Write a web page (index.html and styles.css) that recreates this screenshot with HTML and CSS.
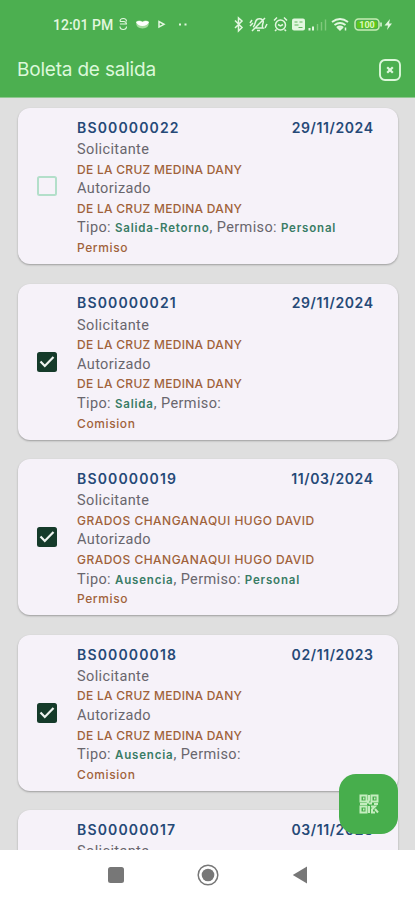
FILE: index.html
```html
<!DOCTYPE html>
<html lang="es">
<head>
<meta charset="utf-8">
<title>Boleta de salida</title>
<link rel="stylesheet" href="styles.css">
</head>
<body>
<div class="app">
  <header class="top">
    <div class="status">
      <span class="clock">12:01 PM</span>
      <svg class="status-left" width="76" height="16" viewBox="0 0 76 16" fill="none" stroke="#e2f7df" stroke-width="1.1">
        <path d="M10.500 5.500C10.500 1.500 4 1.500 4 5.500M4 5.500h3.500q3 0 3 3M4 8h6.500M4 10.500c0 4 6.500 4 6.500 0"/>
        <path d="M20 6q3-2.500 6.500-.5Q30 3.500 33 6q0 6.500-6.500 6.500T20 6Z" fill="#a5dc9e" stroke="none"/>
        <path d="M20 6q3-2 6.500 0 3.500-2 6.500 0-2 4-6.500 4T20 6" fill="#fff" stroke="none"/>
        <path d="M43 5.500v5.500l5-2.700Z" stroke-width="1.500"/>
        <path d="M63 7.500h2v2h-2zM68.500 7.500h2v2h-2z" fill="#e2f7df" stroke="none"/>
      </svg>
      <svg class="status-right" width="162" height="18" viewBox="0 0 162 18" fill="none" stroke="#e2f7df" stroke-width="1.5">
        <path d="m3 5.500 7 7L6.500 16V3l3.500 3-7 7"/>
        <path d="M21 12c3-1 1-7 5-8 4-1 6 2 5 4-1 3-1 4 0 5h-8M25 15.500h3M33 3 20 16M18 8l2-3M18 11l3-3M35 9l-2 4"/>
        <circle cx="48.500" cy="10" r="5"/><path d="m42 5.500 3-3M55 5.500l-3-3M46 9.500l2.500 1.500 2.500-1.500M44.500 14.500l-1.500 1.500M52.500 14.500l1.500 1.500"/>
        <rect x="60" y="3.500" width="13" height="12" rx="2" fill="#e2f7df" stroke="none"/>
        <path d="M62.500 7h3m2 0h3M62.500 10h4M66.500 12.500h4" stroke="#5eb65b" stroke-width="1.200"/>
        <path d="M77.500 15.500v-2.500M81 15.500v-4" stroke-width="2"/><path d="M85.500 15.500V9M89.500 15.500V7M93.500 15.500V4.500" stroke="#80c97c" stroke-width="1.400"/>
        <path d="M100 7q8-6 16 0M102.500 10q5.500-4 11 0M105 12.500q3-2 6 0" stroke-width="1.900"/><path d="m106 13 2 2 2-2Z" fill="#e2f7df"/><path d="M113.500 12.500v3"/>
        <rect x="123" y="4" width="24" height="11" rx="3.500" stroke="#c6edb4"/><rect x="125" y="6" width="20" height="7" rx="1.500" fill="#5fc619" stroke="none"/><path d="M149 7.500v4"/>
        <text x="135" y="12.800" class="battery">100</text>
        <path d="m158 4-5.500 6.500h3.500l-1 4.500 5-6.500H157Z" fill="#e2f7df" stroke="none"/>
      </svg>
    </div>
    <div class="bar">
      <h1>Boleta de salida</h1>
      <svg class="close" width="24" height="24" viewBox="0 0 24 24" fill="none" stroke="#dcf8da"><rect x="2" y="2" width="20" height="20" rx="5" stroke-width="1.900"/><path d="m9.200 9.200 5.600 5.600m0-5.600-5.600 5.600" stroke-width="2.200"/></svg>
    </div>
  </header>
  <main class="list">
    <article class="card">
      <span class="check empty"></span>
      <div class="body">
        <div class="head"><b>BS00000022</b><b class="date">29/11/2024</b></div>
        <p>Solicitante</p><p class="name">DE LA CRUZ MEDINA DANY</p>
        <p>Autorizado</p><p class="name">DE LA CRUZ MEDINA DANY</p>
        <p>Tipo: <em>Salida-Retorno</em>, Permiso: <em>Personal</em></p><p class="name kind">Permiso</p>
      </div>
    </article>
    <article class="card">
      <span class="check"><svg width="20" height="20" viewBox="0 0 20 20"><path d="m3.500 9.500 4.300 4.500L16.500 5"/></svg></span>
      <div class="body">
        <div class="head"><b>BS00000021</b><b class="date">29/11/2024</b></div>
        <p>Solicitante</p><p class="name">DE LA CRUZ MEDINA DANY</p>
        <p>Autorizado</p><p class="name">DE LA CRUZ MEDINA DANY</p>
        <p>Tipo: <em>Salida</em>, Permiso:</p><p class="name kind">Comision</p>
      </div>
    </article>
    <article class="card">
      <span class="check"><svg width="20" height="20" viewBox="0 0 20 20"><path d="m3.500 9.500 4.300 4.500L16.500 5"/></svg></span>
      <div class="body">
        <div class="head"><b>BS00000019</b><b class="date">11/03/2024</b></div>
        <p>Solicitante</p><p class="name wide">GRADOS CHANGANAQUI HUGO DAVID</p>
        <p>Autorizado</p><p class="name wide">GRADOS CHANGANAQUI HUGO DAVID</p>
        <p>Tipo: <em>Ausencia</em>, Permiso: <em>Personal</em></p><p class="name kind">Permiso</p>
      </div>
    </article>
    <article class="card">
      <span class="check"><svg width="20" height="20" viewBox="0 0 20 20"><path d="m3.500 9.500 4.300 4.500L16.500 5"/></svg></span>
      <div class="body">
        <div class="head"><b>BS00000018</b><b class="date">02/11/2023</b></div>
        <p>Solicitante</p><p class="name">DE LA CRUZ MEDINA DANY</p>
        <p>Autorizado</p><p class="name">DE LA CRUZ MEDINA DANY</p>
        <p>Tipo: <em>Ausencia</em>, Permiso:</p><p class="name kind">Comision</p>
      </div>
    </article>
    <article class="card">
      <span class="check"></span>
      <div class="body">
        <div class="head"><b>BS00000017</b><b class="date">03/11/2023</b></div>
        <p>Solicitante</p>
      </div>
    </article>
  </main>
  <button class="fab" aria-label="QR">
    <svg width="20" height="20" viewBox="0 0 20 20" fill="none" stroke="#c5edbf" stroke-width="2"><path d="M1.500 1.500h6v6h-6zM12.500 1.500h6v6h-6zM1.500 12.500h6v6h-6zM4 4.500h1.500M15 4.500h1.500M4 15.500h1.500M10 1v5L8.500 9.500M1 10h7M10 9.500h3M15 10h4M10 12v7M12 12.500h4l-3 3v3h3M16 15l3 3.500"/></svg>
  </button>
  <nav class="nav">
    <svg width="16" height="16" viewBox="0 0 16 16"><rect width="16" height="16" rx="2.500" fill="#777"/></svg>
    <svg width="22" height="22" viewBox="0 0 22 22"><circle cx="11" cy="11" r="9.800" fill="none" stroke="#777" stroke-width="1.500"/><circle cx="11" cy="11" r="6.300" fill="#777"/></svg>
    <svg width="16" height="18" viewBox="0 0 16 18"><path d="M15 .5v17L.8 9Z" fill="#777"/></svg>
  </nav>
</div>
</body>
</html>
```
FILE: styles.css
```css
* { box-sizing: border-box; }
body { margin: 0; font-family: Roboto, sans-serif; }
.app { position: relative; width: 415px; height: 900px; display: flex; flex-direction: column; overflow: hidden; background: #dfdfdf; }
.top { height: 98px; flex: none; background: #4caf50; border-bottom: 1px solid #8fc88f; }
.status { height: 48px; padding: 0 21px 0 53px; display: flex; align-items: center; }
.clock { width: 63px; padding-top: 1px; white-space: nowrap; font-size: 14px; font-weight: 500; letter-spacing: 0; color: #e2f7df; }
.status-right { margin-left: auto; }
.battery { font: 700 9px Roboto, sans-serif; fill: #d9f7c8; stroke: none; text-anchor: middle; }
.bar { height: 43px; padding: 0 13px 0 17px; display: flex; align-items: center; justify-content: space-between; }
h1 { margin: 0; font: 400 19px Inter, sans-serif; letter-spacing: -.2px; color: #dcf8da; }
.list { flex: 1; min-height: 0; overflow: hidden; padding: 10px 17px 0 18px; display: flex; flex-direction: column; gap: 19.600px; }
.card { flex: none; height: 156px; border-radius: 12px; background: #f6f2f9; box-shadow: 0 1px 2px rgba(0,0,0,.3); display: flex; align-items: center; padding: 0 25px 0 19px; }
.check { flex: none; width: 20px; height: 20px; border-radius: 2.500px; background: #153b2a; }
.check svg { display: block; fill: none; stroke: #eef4f0; stroke-width: 2.200; }
.check.empty { background: none; border: 2px solid #b3dfca; }
.body { flex: 1; height: 156px; margin-left: 20px; padding-top: 7.800px; }
.head { height: 24.200px; display: flex; justify-content: space-between; font: 600 14px/23px Inter, sans-serif; color: #254977; }
.head b { font-weight: 600; letter-spacing: 1.150px; }
.head .date { letter-spacing: .6px; margin-right: -.6px; }
p { margin: 0; height: 19.600px; white-space: nowrap; font-size: 14.500px; line-height: 19.600px; letter-spacing: .38px; color: #69666d; }
.name { font: 500 12px/19.600px Inter, sans-serif; color: #a0623b; letter-spacing: .28px; }
.wide { letter-spacing: .48px; }
.kind { letter-spacing: .6px; }
em { font: 600 11.500px Inter, sans-serif; letter-spacing: .82px; color: #397c65; }
.fab { position: absolute; left: 339px; top: 774px; width: 59px; height: 60px; border: 0; padding: 0; border-radius: 17px; background: #47ae4c; display: flex; align-items: center; justify-content: center; }
.nav { flex: none; height: 50px; background: #fff; display: flex; align-items: center; justify-content: center; gap: 73px; }
```
